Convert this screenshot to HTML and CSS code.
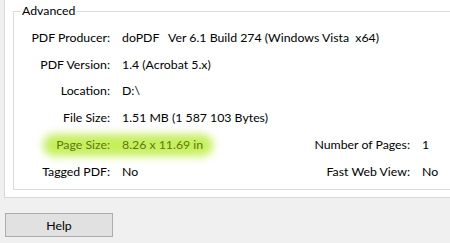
FILE: index.html
```html
<!DOCTYPE html>
<html lang="en">
<head>
  <meta charset="UTF-8">
  <title>Document Properties</title>
  <link rel="stylesheet" href="styles.css">
</head>
<body>
  <div class="panel">
    <fieldset class="group">
      <legend>Advanced</legend>
      <div class="grid">
        <span class="label">PDF Producer:</span>
        <span class="value wide">doPDF   Ver 6.1 Build 274 (Windows Vista  x64)</span>

        <span class="label">PDF Version:</span>
        <span class="value wide">1.4 (Acrobat 5.x)</span>

        <span class="label">Location:</span>
        <span class="value wide">D:\</span>

        <span class="label">File Size:</span>
        <span class="value wide">1.51 MB (1 587 103 Bytes)</span>

        <div class="glow"></div>
        <span class="label hl">Page Size:</span>
        <span class="value hl">8.26 x 11.69 in</span>
        <span class="label">Number of Pages:</span>
        <span class="value">1</span>

        <span class="label">Tagged PDF:</span>
        <span class="value">No</span>
        <span class="label">Fast Web View:</span>
        <span class="value">No</span>
      </div>
    </fieldset>
  </div>
  <div class="buttons">
    <button class="btn">Help</button>
  </div>
</body>
</html>
```

FILE: styles.css
```css
html, body {
  margin: 0;
  padding: 0;
}
body {
  width: 450px;
  height: 243px;
  overflow: hidden;
  background-color: #f0f0f0;
  font-family: Lato, "Liberation Sans", sans-serif;
  font-size: 12.3px;
  color: #000;
}
.panel {
  margin-left: 4px;
  width: 446px;
  height: 198px;
  padding: 3px 0 0 8px;
  box-sizing: border-box;
  background-color: #fff;
  border-left: 1px solid #d9d9d9;
  border-bottom: 1px solid #d9d9d9;
}
.group {
  margin: 0;
  padding: 5px 0 3px 0;
  height: 187px;
  box-sizing: border-box;
  border: 1px solid #dcdcdc;
  border-right: none;
}
.group legend {
  margin-left: 7px;
  padding: 0 1px;
  line-height: 16px;
}
.grid {
  display: grid;
  grid-template-columns: 96px 156px 120px auto;
  grid-auto-rows: 26.8px;
  column-gap: 12px;
  align-items: center;
}
.label {
  text-align: right;
  white-space: nowrap;
  position: relative;
}
.value {
  white-space: pre;
  position: relative;
}
.value.wide {
  grid-column: 2 / 5;
}
.glow {
  grid-column: 1 / 3;
  grid-row: 5;
  margin-left: 29px;
  width: 170px;
  height: 22px;
  border-radius: 11px;
  background-color: #c6ef5c;
  filter: blur(4px);
}
.hl {
  grid-row: 5;
  color: #5c7a10;
}
.label.hl {
  grid-column: 1;
}
.value.hl {
  grid-column: 2;
}
.buttons {
  padding: 15px 0 0 5px;
}
.btn {
  display: block;
  width: 108px;
  height: 24px;
  margin: 0;
  padding: 0;
  font-family: inherit;
  font-size: 12.3px;
  color: #000;
  background-color: #e1e1e1;
  border: 1px solid #adadad;
}
```
